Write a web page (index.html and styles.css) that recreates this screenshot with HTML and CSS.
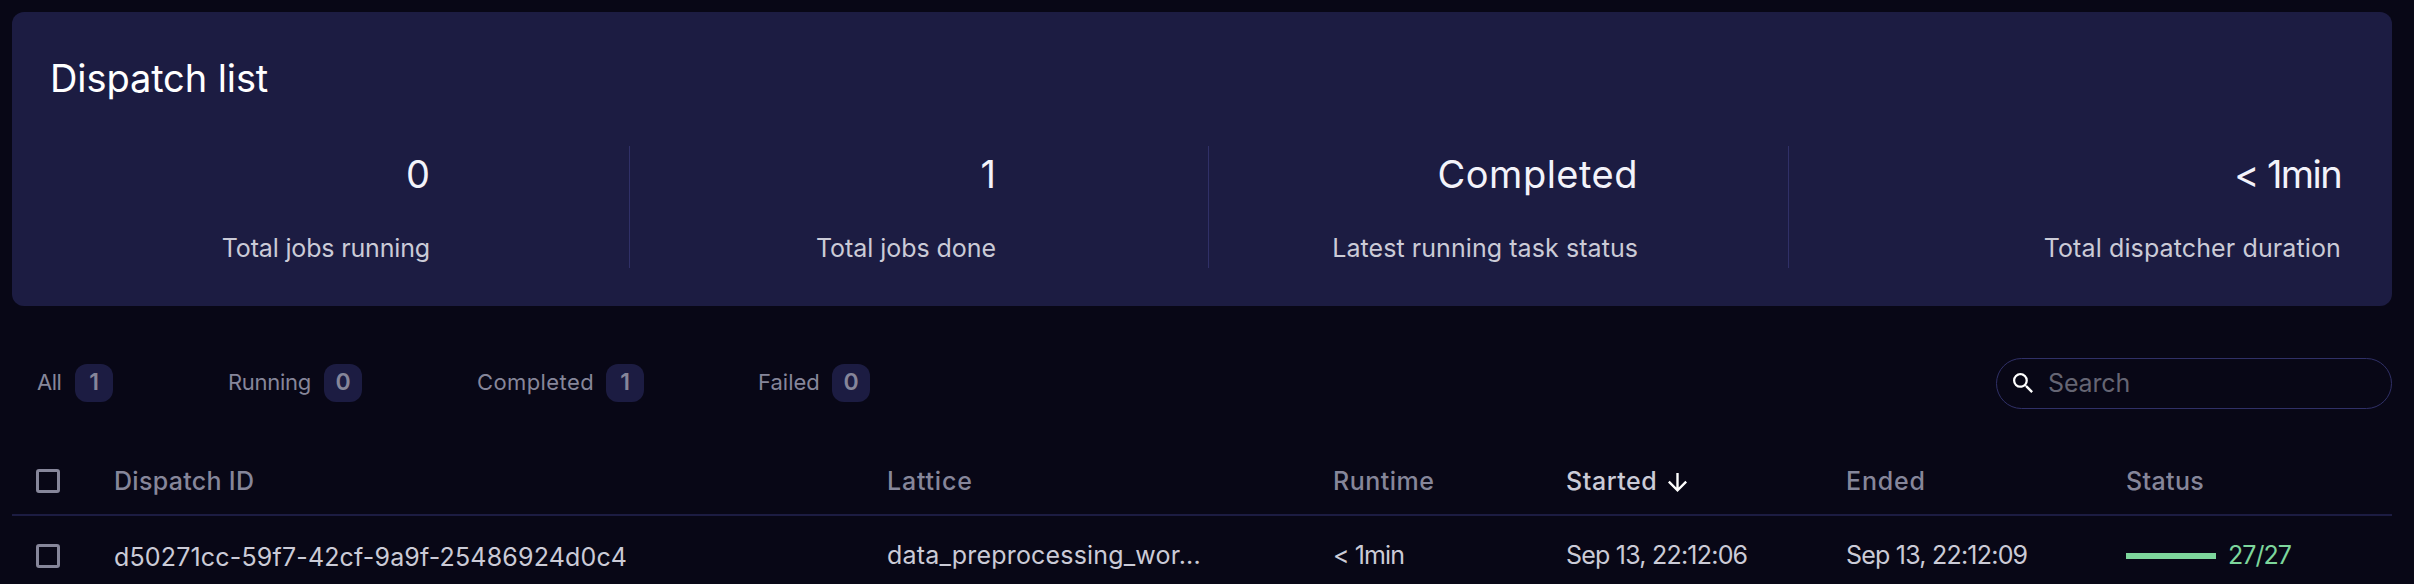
FILE: index.html
```html
<!DOCTYPE html>
<html lang="en">
<head>
<meta charset="utf-8">
<title>Dispatch list</title>
<link rel="stylesheet" href="styles.css">
</head>
<body>
<main class="page">
  <section class="summary">
    <h1 class="summary-title">Dispatch list</h1>
    <div class="stats">
      <div class="stat stat-running"><span class="stat-value">0</span><span class="stat-label">Total jobs running</span></div>
      <div class="stat stat-done"><span class="stat-value">1</span><span class="stat-label">Total jobs done</span></div>
      <div class="stat stat-latest"><span class="stat-value">Completed</span><span class="stat-label">Latest running task status</span></div>
      <div class="stat stat-duration"><span class="stat-value">&lt; 1min</span><span class="stat-label">Total dispatcher duration</span></div>
    </div>
  </section>

  <div class="toolbar">
    <nav class="tabs">
      <a class="tab tab-all"><span class="tab-label">All</span><span class="badge">1</span></a>
      <a class="tab tab-running"><span class="tab-label">Running</span><span class="badge">0</span></a>
      <a class="tab tab-completed"><span class="tab-label">Completed</span><span class="badge">1</span></a>
      <a class="tab tab-failed"><span class="tab-label">Failed</span><span class="badge">0</span></a>
    </nav>
    <div class="search">
      <svg class="search-icon" viewBox="3 3 17.5 17.5"><path d="M15.5 14h-.79l-.28-.27A6.471 6.471 0 0 0 16 9.5 6.5 6.5 0 1 0 9.500 16c1.610 0 3.090-.59 4.230-1.570l.27.28v.79l5 4.990L20.490 19l-4.990-5zm-6 0C7.010 14 5 11.990 5 9.500S7.010 5 9.500 5 14 7.010 14 9.500 11.990 14 9.500 14z"/></svg>
      <span class="search-text">Search</span>
    </div>
  </div>

  <div class="table">
    <div class="row row-head">
      <span class="checkbox"></span>
      <span class="cell h-id">Dispatch ID</span>
      <span class="cell h-lattice">Lattice</span>
      <span class="cell h-runtime">Runtime</span>
      <span class="cell h-started">Started<svg class="arrow" viewBox="4 4 16 16"><path d="M20 12l-1.410-1.410L13 16.170V4h-2v12.170l-5.580-5.590L4 12l8 8 8-8z"/></svg></span>
      <span class="cell h-ended">Ended</span>
      <span class="cell h-status">Status</span>
    </div>
    <div class="row row-body">
      <span class="checkbox"></span>
      <span class="cell c-id">d50271cc-59f7-42cf-9a9f-25486924d0c4</span>
      <span class="cell c-lattice">data_preprocessing_wor...</span>
      <span class="cell c-runtime">&lt; 1min</span>
      <span class="cell c-date">Sep 13, 22:12:06</span>
      <span class="cell c-date">Sep 13, 22:12:09</span>
      <span class="cell c-status"><span class="progress"></span><span class="c-count">27/27</span></span>
    </div>
  </div>
</main>
</body>
</html>
```
FILE: styles.css
```css
* { box-sizing: border-box; }

body {
  margin: 0;
  height: 584px;
  overflow: hidden;
  background: #080716;
  color: #cbcbd7;
  font: 400 25px/30px Inter, "Liberation Sans", sans-serif;
}

.page { padding: 12px 22px 0 12px; }

/* Summary card */
.summary {
  height: 294px;
  padding: 46px 0 38px 38px;
  border-radius: 12px;
  background: #1c1c42;
}
.summary-title {
  margin: 0 0 48px;
  color: #fff;
  font-size: 38px;
  font-weight: 400;
  line-height: 40px;
  letter-spacing: -0.1px;
}
.stats {
  display: grid;
  grid-template-columns: 580px 579px 580px 603px;
  height: 122px;
}
.stat {
  display: flex;
  flex-direction: column;
  align-items: flex-end;
  gap: 39px;
  padding-top: 8px;
  border-right: 1px solid #303067;
  white-space: nowrap;
}
.stat-value { color: #f3f3fa; font-size: 38px; line-height: 40px; }
.stat-running { padding-right: 199px; }
.stat-running .stat-label { letter-spacing: -0.16px; }
.stat-done { padding-right: 212px; }
.stat-done .stat-label { letter-spacing: -0.05px; }
.stat-latest { padding-right: 150px; }
.stat-latest .stat-value { letter-spacing: 0.5px; }
.stat-latest .stat-label { letter-spacing: 0.07px; }
.stat-duration { padding-right: 51px; border-right: 0; }
.stat-duration .stat-value { letter-spacing: -1.6px; }
.stat-duration .stat-label { letter-spacing: 0.12px; }

/* Filters and search */
.toolbar {
  display: flex;
  align-items: flex-start;
  justify-content: space-between;
  height: 51px;
  margin-top: 52px;
  padding-left: 25px;
}
.tabs { display: flex; gap: 114px; padding-top: 6px; color: #86869a; }
.tab { display: flex; align-items: center; justify-content: space-between; height: 38px; }
.tab-label { padding-bottom: 2px; font-size: 22px; }
.tab-all { width: 76px; }
.tab-all .tab-label { letter-spacing: -0.5px; }
.tab-running { width: 135px; padding-left: 1px; }
.tab-running .tab-label { letter-spacing: -0.3px; }
.tab-completed { width: 168px; padding-left: 1px; }
.tab-completed .tab-label { letter-spacing: 0.4px; }
.tab-failed { width: 112px; }
.badge {
  width: 38px;
  height: 38px;
  border-radius: 12px;
  background: #1c1c42;
  font-size: 23px;
  font-weight: 600;
  line-height: 36px;
  text-align: center;
}
.search {
  display: flex;
  align-items: center;
  width: 396px;
  height: 51px;
  padding-left: 16px;
  border: 1px solid #303067;
  border-radius: 26px;
  color: #656573;
}
.search-icon { width: 20px; height: 20px; margin-bottom: 2px; fill: #fff; }
.search-text { margin-left: 15px; padding-bottom: 2px; letter-spacing: -0.14px; }

/* Dispatch table */
.table { margin-top: 39px; }
.row {
  display: grid;
  grid-template-columns: 78px 773px 446px 233px 280px 280px 1fr;
  align-items: center;
  padding-left: 24px;
  white-space: nowrap;
}
.row-head {
  height: 68px;
  border-bottom: 2px solid #1c1c42;
  color: #86869a;
  font-weight: 500;
}
.row-body { height: 80px; }
.row-head .cell { padding-bottom: 1px; }
.row-body .cell { padding-bottom: 2px; }
.row-body .c-id { padding: 2px 0 0; letter-spacing: 0.17px; }
.checkbox { width: 24px; height: 24px; border: 3px solid #86869a; border-radius: 3px; }
.h-id { letter-spacing: 0.3px; }
.h-lattice { letter-spacing: 0.8px; }
.h-runtime { letter-spacing: 0.5px; }
.h-started { display: flex; align-items: center; color: #cbcbd7; letter-spacing: 0.55px; }
.h-ended { letter-spacing: 0.8px; }
.h-status { letter-spacing: 0.36px; }
.arrow { width: 19px; height: 19px; margin: 3px 0 0 11px; fill: #fff; }
.c-lattice { letter-spacing: 0.18px; }
.c-runtime { letter-spacing: -0.9px; }
.c-date { letter-spacing: -0.78px; }
.row-body .c-status { display: flex; align-items: center; padding-bottom: 0; color: #7dd69c; }
.progress { width: 90px; height: 6px; margin-right: 12px; background: #7dd69c; }
.c-count { padding-bottom: 2px; letter-spacing: -1px; }
```
